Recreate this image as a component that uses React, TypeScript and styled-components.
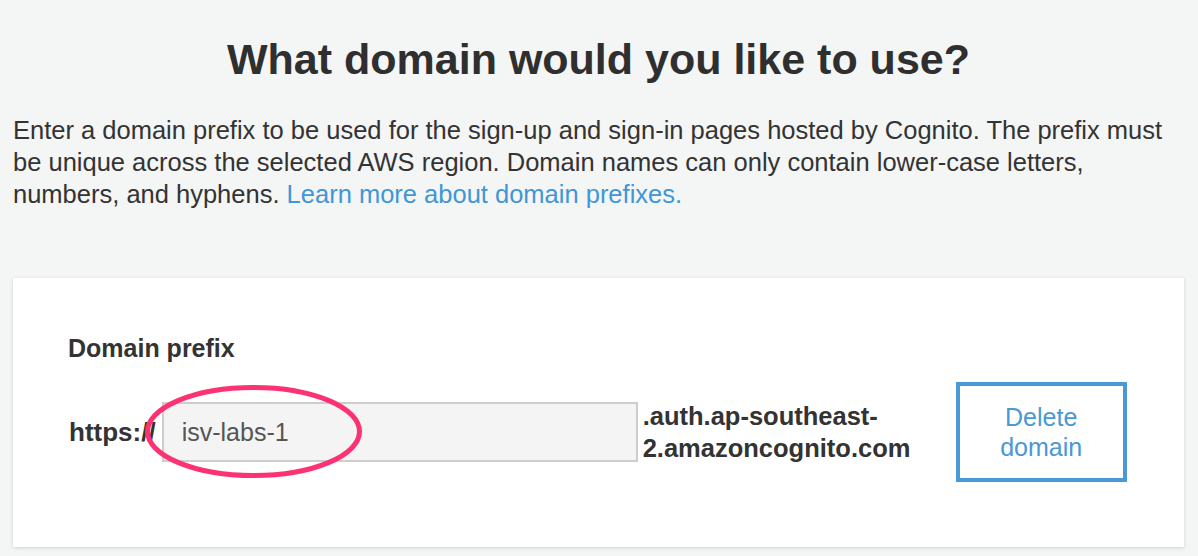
import React from 'react'
import styled, { createGlobalStyle } from 'styled-components'

const GlobalStyle = createGlobalStyle`
  html, body {
    margin: 0;
    padding: 0;
    background: #f4f5f5;
  }
  body {
    font-family: 'Liberation Sans', Arial, Helvetica, sans-serif;
    color: #333333;
  }
`

const Page = styled.div`
  box-sizing: border-box;
  width: 1198px;
  height: 556px;
  padding: 34px 14px 0 13px;
  overflow: hidden;
`

const Title = styled.h1`
  margin: 0;
  font-size: 43px;
  line-height: 50px;
  font-weight: 700;
  text-align: center;
  color: #2f2f2f;
`

const Intro = styled.p`
  margin: 30px 0 0;
  font-size: 25.5px;
  line-height: 32px;
  color: #333333;
`

const LearnMore = styled.a`
  color: #3f97d6;
  text-decoration: none;
  cursor: pointer;
`

const Card = styled.section`
  box-sizing: border-box;
  margin-top: 68px;
  height: 269px;
  background: #ffffff;
  padding: 55px 55px 0;
  box-shadow: 0 1px 4px rgba(0, 0, 0, 0.14);
`

const FieldLabel = styled.div`
  font-size: 25px;
  line-height: 30px;
  font-weight: 700;
  color: #333333;
`

const DomainRow = styled.div`
  display: flex;
  align-items: center;
  margin-top: 19px;
  padding-left: 1px;
`

const Protocol = styled.span`
  font-size: 26px;
  font-weight: 700;
  line-height: 32px;
  margin-right: 6px;
`

const InputWrap = styled.div`
  position: relative;
`

const PrefixInput = styled.input`
  box-sizing: border-box;
  width: 476px;
  height: 60px;
  padding: 0 18px;
  border: 2px solid #cdcdcd;
  background: #f4f4f4;
  font-family: 'Liberation Sans', Arial, Helvetica, sans-serif;
  font-size: 25px;
  color: #555555;
  outline: none;
`

const Highlight = styled.svg`
  position: absolute;
  left: -17px;
  top: -17px;
  pointer-events: none;
  overflow: visible;
`

const Suffix = styled.div`
  width: 272px;
  margin-left: 5px;
  font-size: 25.5px;
  line-height: 32px;
  font-weight: 700;
  color: #333333;
`

const OutlineButton = styled.button`
  box-sizing: border-box;
  width: 171px;
  height: 100px;
  margin-left: 41px;
  border: 4px solid #4a98d4;
  background: #ffffff;
  color: #4a98d4;
  font-family: 'Liberation Sans', Arial, Helvetica, sans-serif;
  font-size: 25px;
  line-height: 30px;
  padding: 0 24px;
  cursor: pointer;
`

export default function App() {
  return (
    <>
      <GlobalStyle />
      <Page>
        <Title>What domain would you like to use?</Title>
        <Intro>
          Enter a domain prefix to be used for the sign-up and sign-in pages hosted by Cognito. The prefix
          must
          <br />
          be unique across the selected AWS region. Domain names can only contain lower-case letters,
          <br />
          numbers, and hyphens. <LearnMore>Learn more about domain prefixes.</LearnMore>
        </Intro>
        <Card>
          <FieldLabel>Domain prefix</FieldLabel>
          <DomainRow>
            <Protocol>https://</Protocol>
            <InputWrap>
              <PrefixInput defaultValue="isv-labs-1" />
              <Highlight width="217" height="93" viewBox="0 0 217 93">
                <ellipse cx="108.5" cy="46.5" rx="106" ry="44" fill="none" stroke="#fd3272" strokeWidth="5" />
              </Highlight>
            </InputWrap>
            <Suffix>.auth.ap-southeast-2.amazoncognito.com</Suffix>
            <OutlineButton>Delete domain</OutlineButton>
          </DomainRow>
        </Card>
      </Page>
    </>
  )
}
